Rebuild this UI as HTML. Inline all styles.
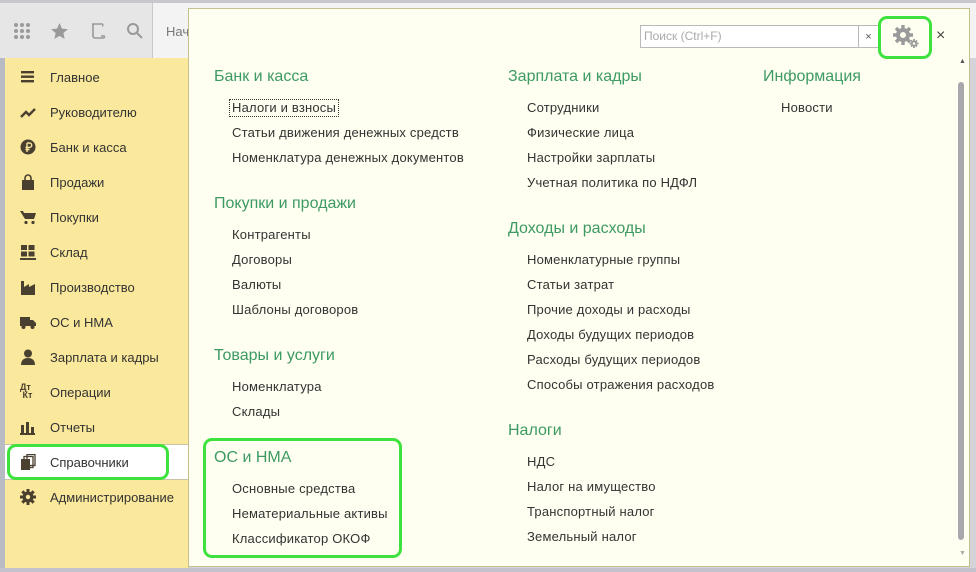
<!DOCTYPE html>
<html><head><meta charset="utf-8">
<style>
*{margin:0;padding:0;box-sizing:border-box}
body{width:976px;height:572px;position:relative;overflow:hidden;background:#d4d3da;font-family:"Liberation Sans",Arial,sans-serif}
.a{position:absolute;white-space:nowrap}
.h{position:absolute;font-size:16px;color:#3d9a63;line-height:20px;white-space:nowrap;transform:translateY(1px)}
.i{position:absolute;font-size:13px;color:#333;line-height:16px;white-space:nowrap;letter-spacing:0.2px;transform:translateY(1px)}
.s{position:absolute;left:50px;font-size:13px;color:#333;line-height:16px;white-space:nowrap;transform:translateY(1px)}
.ic{position:absolute;left:20px;width:16px;height:16px}
.g{position:absolute;border:3px solid #3ee23e;border-radius:9px}
</style></head><body>
<div class="a" style="left:0;top:0;width:976px;height:3px;background:#c9c7cd"></div>
<div class="a" style="left:0;top:3px;width:153px;height:55px;background:#e6e6e6;border-right:1px solid #c8c8c8"></div>
<div class="a" style="left:153px;top:3px;width:823px;height:55px;background:#f3f3f3"></div>
<div class="a" style="left:166px;top:24px;font-size:13px;color:#777">Нач</div>
<svg class="a" style="left:13px;top:22px" width="18" height="18" viewBox="0 0 18 18" fill="#9a9a9a"><g><circle cx="3" cy="3" r="2"/><circle cx="9" cy="3" r="2"/><circle cx="15" cy="3" r="2"/><circle cx="3" cy="9" r="2"/><circle cx="9" cy="9" r="2"/><circle cx="15" cy="9" r="2"/><circle cx="3" cy="15" r="2"/><circle cx="9" cy="15" r="2"/><circle cx="15" cy="15" r="2"/></g></svg>
<svg class="a" style="left:51px;top:23px" width="17" height="16" viewBox="0 0 24 23"><path d="M12 0l3.5 8 8.5.8-6.5 5.7 2 8.5L12 18.5 4.5 23l2-8.5L0 8.8 8.5 8z" fill="#999"/></svg>
<svg class="a" style="left:88px;top:22px" width="18" height="18" viewBox="0 0 18 18" fill="none" stroke="#999" stroke-width="1.6"><path d="M4 2h10M5 2v12c0 1 1 2 2 2h8M14 2c1 0 1 2 0 2M15 16c1 0 2-1 1-2h-3"/></svg>
<svg class="a" style="left:126px;top:22px" width="17" height="17" viewBox="0 0 17 17" fill="none" stroke="#999" stroke-width="2"><circle cx="7" cy="7" r="5"/><path d="M10.5 10.5L16 16"/></svg>
<div class="a" style="left:0;top:58px;width:5px;height:514px;background:#b9bbc4"></div>
<div class="a" style="left:5px;top:58px;width:184px;height:510px;background:#fae89c;border-right:1px solid #d9c98a"></div>
<div class="a" style="left:5px;top:444px;width:184px;height:36px;background:#fff;border-top:1px solid #c9c2a6;border-bottom:1px solid #c9c2a6"></div>
<div class="a" style="left:0;top:568px;width:976px;height:4px;background:#c4c3cb"></div>

<svg class="ic" style="top:69px" viewBox="0 0 16 16" fill="#4a4030"><rect x="1" y="2" width="13" height="2.4"/><rect x="1" y="6.5" width="13" height="2.4"/><rect x="1" y="11" width="13" height="2.4"/></svg>
<div class="s" style="top:69px">Главное</div>
<svg class="ic" style="top:104px" viewBox="0 0 16 16" fill="none" stroke="#4a4030" stroke-width="2.4"><path d="M1 13l5-5 3 3 6-6"/></svg>
<div class="s" style="top:104px">Руководителю</div>
<svg class="ic" style="top:139px" viewBox="0 0 16 16"><circle cx="8" cy="8" r="7.5" fill="#4a4030"/><path d="M7 4v9M7 4h2.5a2.2 2.2 0 010 4.4H5.5M5.5 10.5h4" stroke="#fae89c" stroke-width="1.4" fill="none"/></svg>
<div class="s" style="top:139px">Банк и касса</div>
<svg class="ic" style="top:174px" viewBox="0 0 16 16"><path d="M2 6h12v10H2z" fill="#4a4030"/><path d="M5 6V4a3 3 0 016 0v2" stroke="#4a4030" stroke-width="1.6" fill="none"/></svg>
<div class="s" style="top:174px">Продажи</div>
<svg class="ic" style="top:209px" viewBox="0 0 16 16" fill="#4a4030"><path d="M0 2h3l1 2h12l-2 6H5z"/><circle cx="6" cy="13.5" r="1.6"/><circle cx="13" cy="13.5" r="1.6"/></svg>
<div class="s" style="top:209px">Покупки</div>
<svg class="ic" style="top:244px" viewBox="0 0 16 16" fill="#4a4030"><rect x="1" y="1" width="6" height="5"/><rect x="8.5" y="1" width="6" height="5"/><rect x="1" y="7.5" width="6" height="5"/><rect x="8.5" y="7.5" width="6" height="5"/><rect x="0" y="14" width="16" height="2"/></svg>
<div class="s" style="top:244px">Склад</div>
<svg class="ic" style="top:279px" viewBox="0 0 16 16" fill="#4a4030"><path d="M1 16V2h3v6l5-3v3l6-3v11z"/></svg>
<div class="s" style="top:279px">Производство</div>
<svg class="ic" style="top:314px" viewBox="0 0 16 16" fill="#4a4030"><path d="M0 3h10v9H0zM10 6h3l3 3v3h-6z"/><circle cx="3.5" cy="13" r="2"/><circle cx="12.5" cy="13" r="2"/></svg>
<div class="s" style="top:314px">ОС и НМА</div>
<svg class="ic" style="top:349px" viewBox="0 0 16 16" fill="#4a4030"><circle cx="8" cy="4.5" r="4"/><path d="M1 16c0-5 3-7 7-7s7 2 7 7z"/></svg>
<div class="s" style="top:349px">Зарплата и кадры</div>
<div class="a" style="left:20px;top:383px;font-size:9px;line-height:8px;color:#4a4030;font-weight:bold">Дт<br>&nbsp;Кт</div>
<div class="s" style="top:384px">Операции</div>
<svg class="ic" style="top:419px" viewBox="0 0 16 16" fill="#4a4030"><rect x="1" y="6" width="3" height="9"/><rect x="6" y="3" width="3" height="12"/><rect x="11" y="8" width="3" height="7"/><rect x="0" y="14" width="15" height="2"/></svg>
<div class="s" style="top:419px">Отчеты</div>
<svg class="ic" style="top:454px" viewBox="0 0 16 16" fill="#4a4030"><rect x="1" y="5" width="9" height="11"/><rect x="4" y="2.5" width="9" height="11" fill="none" stroke="#4a4030" stroke-width="1.3"/><rect x="7" y="0.5" width="8" height="11" fill="none" stroke="#4a4030" stroke-width="1.3"/></svg>
<div class="s" style="top:454px">Справочники</div>
<svg class="ic" style="top:489px" viewBox="0 0 16 16"><circle cx="8" cy="8" r="5.5" fill="#4a4030"/><g stroke="#4a4030" stroke-width="3"><path d="M8 0v16M0 8h16M2.3 2.3l11.4 11.4M13.7 2.3L2.3 13.7"/></g><circle cx="8" cy="8" r="2.2" fill="#fae89c"/></svg>
<div class="s" style="top:489px">Администрирование</div>

<div class="a" style="left:188px;top:8px;width:782px;height:559px;background:#fefff0;border:1px solid #c3c08c"></div>
<div class="a" style="left:640px;top:25px;width:219px;height:23px;background:#fff;border:1px solid #b9b9b9;font-size:12px;color:#aaa;padding:3px 3px;line-height:15px">Поиск (Ctrl+F)</div>
<div class="a" style="left:859px;top:25px;width:20px;height:23px;background:#fff;border:1px solid #b9b9b9;border-left:none;font-size:11px;color:#555;text-align:center;line-height:22px">×</div>
<svg class="a" style="left:891px;top:24px" width="30" height="26" viewBox="0 0 30 26"><g stroke="#9a9a9a" stroke-width="3.4"><path d="M12 1v20M2 11h20M5 4l14 14M19 4L5 18"/></g><circle cx="12" cy="11" r="7" fill="#9a9a9a"/><circle cx="12" cy="11" r="3" fill="#fefff0"/><g stroke="#9a9a9a" stroke-width="1.8"><path d="M23 15v9M18.5 19.5h9M20 16.5l6 6M26 16.5l-6 6"/></g><circle cx="23" cy="19.5" r="3" fill="#9a9a9a"/><circle cx="23" cy="19.5" r="1.3" fill="#fefff0"/></svg>
<div class="a" style="left:936px;top:27px;font-size:16px;color:#444">×</div>
<div class="a" style="left:956px;top:61px;width:11px;height:505px;background:#fefff0"></div>
<div class="a" style="left:959px;top:58px;font-size:7px;color:#555">▲</div>
<div class="a" style="left:958px;top:82px;width:6px;height:458px;border-radius:3px;background:#a8a8ac"></div>
<div class="a" style="left:959px;top:550px;font-size:7px;color:#aaa">▼</div>

<div class="h" style="left:214px;top:66px">Банк и касса</div>
<div class="i" style="left:229px;top:98px;padding:0 2px;border:1px dotted #333">Налоги и взносы</div>
<div class="i" style="left:232px;top:124px">Статьи движения денежных средств</div>
<div class="i" style="left:232px;top:149px">Номенклатура денежных документов</div>
<div class="h" style="left:214px;top:193px">Покупки и продажи</div>
<div class="i" style="left:232px;top:226px">Контрагенты</div>
<div class="i" style="left:232px;top:251px">Договоры</div>
<div class="i" style="left:232px;top:276px">Валюты</div>
<div class="i" style="left:232px;top:301px">Шаблоны договоров</div>
<div class="h" style="left:214px;top:345px">Товары и услуги</div>
<div class="i" style="left:232px;top:378px">Номенклатура</div>
<div class="i" style="left:232px;top:403px">Склады</div>
<div class="h" style="left:214px;top:447px">ОС и НМА</div>
<div class="i" style="left:232px;top:480px">Основные средства</div>
<div class="i" style="left:232px;top:505px">Нематериальные активы</div>
<div class="i" style="left:232px;top:530px">Классификатор ОКОФ</div>
<div class="h" style="left:508px;top:66px">Зарплата и кадры</div>
<div class="i" style="left:527px;top:99px">Сотрудники</div>
<div class="i" style="left:527px;top:124px">Физические лица</div>
<div class="i" style="left:527px;top:149px">Настройки зарплаты</div>
<div class="i" style="left:527px;top:174px">Учетная политика по НДФЛ</div>
<div class="h" style="left:508px;top:218px">Доходы и расходы</div>
<div class="i" style="left:527px;top:251px">Номенклатурные группы</div>
<div class="i" style="left:527px;top:276px">Статьи затрат</div>
<div class="i" style="left:527px;top:301px">Прочие доходы и расходы</div>
<div class="i" style="left:527px;top:326px">Доходы будущих периодов</div>
<div class="i" style="left:527px;top:351px">Расходы будущих периодов</div>
<div class="i" style="left:527px;top:376px">Способы отражения расходов</div>
<div class="h" style="left:508px;top:420px">Налоги</div>
<div class="i" style="left:527px;top:453px">НДС</div>
<div class="i" style="left:527px;top:478px">Налог на имущество</div>
<div class="i" style="left:527px;top:503px">Транспортный налог</div>
<div class="i" style="left:527px;top:528px">Земельный налог</div>
<div class="h" style="left:763px;top:66px">Информация</div>
<div class="i" style="left:781px;top:99px">Новости</div>

<div class="g" style="left:7px;top:444px;width:162px;height:36px"></div>
<div class="g" style="left:203px;top:438px;width:199px;height:120px"></div>
<div class="g" style="left:878px;top:16px;width:54px;height:43px"></div>
</body></html>
